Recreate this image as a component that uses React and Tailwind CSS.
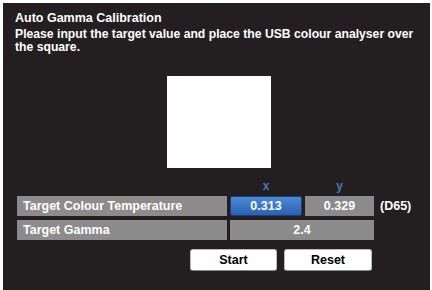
export default function App() {
  const font = { fontFamily: '"Liberation Sans", Arial, sans-serif' };
  return (
    <div
      className="w-[432px] h-[290px] bg-[#231f20] border-t-[3px] border-l-[3px] border-r-[2px] border-white text-white font-bold overflow-hidden"
      style={font}
    >
      <div className="pl-[12px] pt-[8px]">
        <h1 className="text-[12.5px] leading-[14px]">Auto Gamma Calibration</h1>
        <p className="mt-[3px] text-[12.2px] leading-[13px] pr-[4px]">
          Please input the target value and place the USB colour analyser over the square.
        </p>
      </div>

      <div className="mt-[22px] ml-[164px] w-[104px] h-[92px] bg-white" />

      <div className="pl-[14px]">
        <div className="flex mt-[12px] h-[12px] text-[12px] leading-[12px] text-[#4277bb]">
          <div className="w-[213px]" />
          <div className="w-[72px] text-center">x</div>
          <div className="w-[3px]" />
          <div className="w-[69px] text-center">y</div>
        </div>

        <div className="flex items-center mt-[4px] h-[20px] text-[12.5px]">
          <div className="w-[210px] h-full bg-[#8b8b8b] pl-[6px] flex items-center">
            Target Colour Temperature
          </div>
          <div className="ml-[3px] w-[72px] h-full rounded-[2px] border border-[#1d3f73] bg-gradient-to-b from-[#4b8ad6] to-[#2a62b3] flex items-center justify-center">
            0.313
          </div>
          <div className="ml-[3px] w-[69px] h-full bg-[#8b8b8b] flex items-center justify-center">
            0.329
          </div>
          <div className="ml-[6px]">(D65)</div>
        </div>

        <div className="flex items-center mt-[4px] h-[20px] text-[12.5px]">
          <div className="w-[210px] h-full bg-[#8b8b8b] pl-[6px] flex items-center">
            Target Gamma
          </div>
          <div className="ml-[3px] w-[144px] h-full bg-[#8b8b8b] flex items-center justify-center">
            2.4
          </div>
        </div>

        <div className="flex mt-[9px] ml-[173px] gap-[7px] text-[12.5px] text-black">
          <button className="w-[87px] h-[22px] bg-white rounded-[3px] border border-[#bbbbbb] border-b-[#888888] font-bold">
            Start
          </button>
          <button className="w-[88px] h-[22px] bg-white rounded-[3px] border border-[#bbbbbb] border-b-[#888888] font-bold">
            Reset
          </button>
        </div>
      </div>
    </div>
  );
}
